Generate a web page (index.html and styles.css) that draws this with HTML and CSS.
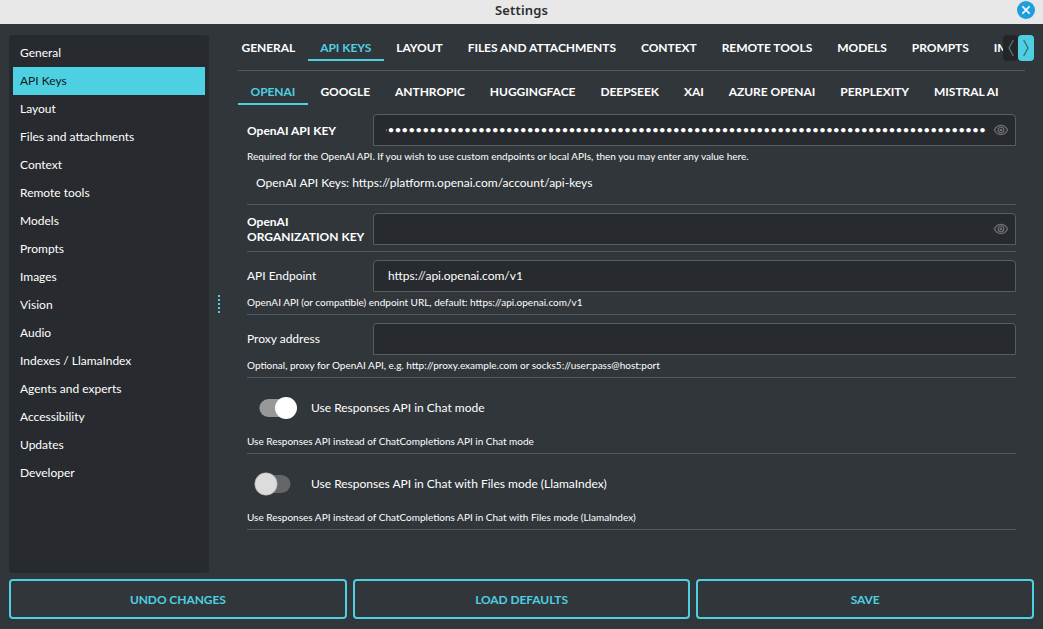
FILE: index.html
```html
<!DOCTYPE html>
<html lang="en">
<head>
<meta charset="utf-8">
<title>Settings</title>
<link rel="stylesheet" href="styles.css">
</head>
<body>
<header class="titlebar">
  <span class="title">Settings</span>
  <button class="close" aria-label="Close"><svg width="18" height="18" viewBox="0 0 18 18"><circle cx="9" cy="9" r="9" fill="#1f9ede"/><path d="M5.4 5.4l7.2 7.2M12.6 5.4l-7.2 7.2" stroke="#fff" stroke-width="1.5"/></svg></button>
</header>
<div class="workspace">
  <nav class="sidebar">
    <a class="nav">General</a>
    <a class="nav selected">API Keys</a>
    <a class="nav">Layout</a>
    <a class="nav">Files and attachments</a>
    <a class="nav">Context</a>
    <a class="nav">Remote tools</a>
    <a class="nav">Models</a>
    <a class="nav">Prompts</a>
    <a class="nav">Images</a>
    <a class="nav">Vision</a>
    <a class="nav">Audio</a>
    <a class="nav">Indexes / LlamaIndex</a>
    <a class="nav">Agents and experts</a>
    <a class="nav">Accessibility</a>
    <a class="nav">Updates</a>
    <a class="nav">Developer</a>
  </nav>
  <div class="splitter"><i></i><i></i><i></i><i></i><i></i></div>
  <main class="content">
    <div class="tabrow">
      <div class="tabs main-tabs">
        <span class="tab">GENERAL</span><span class="tab active">API KEYS</span><span class="tab">LAYOUT</span><span class="tab">FILES AND ATTACHMENTS</span><span class="tab">CONTEXT</span><span class="tab">REMOTE TOOLS</span><span class="tab">MODELS</span><span class="tab">PROMPTS</span><span class="tab">IMAGES</span>
      </div>
      <div class="scroller">
        <span class="arrow left"><svg width="16" height="26" viewBox="0 0 16 26"><path d="M10.300 5L6 13l4.300 8" fill="none" stroke="#626c73" stroke-width="1.3"/></svg></span>
        <span class="arrow right"><svg width="16" height="26" viewBox="0 0 16 26"><path d="M5.700 5L10 13l-4.300 8" fill="none" stroke="#3e6b75" stroke-width="1.3"/></svg></span>
      </div>
    </div>
    <div class="tabs sub-tabs">
      <span class="tab active">OPENAI</span><span class="tab">GOOGLE</span><span class="tab">ANTHROPIC</span><span class="tab">HUGGINGFACE</span><span class="tab">DEEPSEEK</span><span class="tab">XAI</span><span class="tab">AZURE OPENAI</span><span class="tab">PERPLEXITY</span><span class="tab">MISTRAL AI</span>
    </div>
    <div class="form">
      <section class="group key">
        <div class="row"><label class="label strong">OpenAI API KEY</label>
          <div class="field"><span class="secret">•••••••••••••••••••••••••••••••••••••••••••••••••••••••••••••••••••••••••••••••••••••••</span>
          <svg class="eye" width="16" height="12" viewBox="0 0 16 12"><path d="M1.300 6C4.600-.1 11.400-.1 14.700 6C11.400 12.100 4.600 12.100 1.300 6z"/><circle cx="8" cy="6" r="2.800"/><circle cx="8" cy="6" r=".7"/></svg></div></div>
        <p class="help">Required for the OpenAI API. If you wish to use custom endpoints or local APIs, then you may enter any value here.</p>
        <p class="link">OpenAI API Keys: https://platform.openai.com/account/api-keys</p>
      </section>
      <section class="group org">
        <div class="row"><label class="label strong">OpenAI<br>ORGANIZATION KEY</label>
          <div class="field"><svg class="eye" width="16" height="12" viewBox="0 0 16 12"><path d="M1.300 6C4.600-.1 11.400-.1 14.700 6C11.400 12.100 4.600 12.100 1.300 6z"/><circle cx="8" cy="6" r="2.800"/><circle cx="8" cy="6" r=".7"/></svg></div></div>
      </section>
      <section class="group text">
        <div class="row"><label class="label plain">API Endpoint</label><div class="field"><span class="value">https://api.openai.com/v1</span></div></div>
        <p class="help">OpenAI API (or compatible) endpoint URL, default: https://api.openai.com/v1</p>
      </section>
      <section class="group text">
        <div class="row"><label class="label plain">Proxy address</label><div class="field"></div></div>
        <p class="help">Optional, proxy for OpenAI API, e.g. http://proxy.example.com or socks5://user:pass@host:port</p>
      </section>
      <section class="group toggle">
        <div class="switch-row"><svg width="64" height="26" viewBox="0 0 64 26"><rect x="12.400" y="4" width="36" height="18" rx="9" fill="#989898"/><circle cx="39" cy="13" r="11" fill="#fff"/></svg><span class="caption">Use Responses API in Chat mode</span></div>
        <p class="help">Use Responses API instead of ChatCompletions API in Chat mode</p>
      </section>
      <section class="group toggle">
        <div class="switch-row"><svg width="64" height="26" viewBox="0 0 64 26"><rect x="7.500" y="4" width="36" height="18" rx="9" fill="#646769"/><circle cx="19" cy="13" r="11.200" fill="#dcdcdc" stroke="#aaa" stroke-width=".6"/></svg><span class="caption">Use Responses API in Chat with Files mode (LlamaIndex)</span></div>
        <p class="help">Use Responses API instead of ChatCompletions API in Chat with Files mode (LlamaIndex)</p>
      </section>
    </div>
  </main>
</div>
<footer class="actions">
  <button class="action">UNDO CHANGES</button>
  <button class="action">LOAD DEFAULTS</button>
  <button class="action">SAVE</button>
</footer>
</body>
</html>
```

FILE: styles.css
```css
* { box-sizing: border-box; }
body {
  margin: 0;
  width: 1043px;
  height: 629px;
  overflow: hidden;
  display: flex;
  flex-direction: column;
  background: #31363b;
  color: #fff;
  font: 12px/15px Lato, sans-serif;
}
p { margin: 0; }
svg { display: block; flex: none; }
.titlebar {
  position: relative;
  height: 24px;
  flex: none;
  background: #e8e8e8;
  color: #2d2d2d;
  text-align: center;
}
.title { font: 600 13px/21px "Noto Sans", sans-serif; letter-spacing: .15px; }
.close {
  position: absolute;
  top: 1px;
  right: 8px;
  padding: 0;
  border: 0;
  background: none;
}
.workspace { display: flex; height: 549px; padding-top: 11px; padding-left: 9px; }
.sidebar {
  width: 200px;
  height: 538px;
  padding: 4px;
  border-radius: 4px;
  background: #272a2e;
}
.nav { display: block; height: 28px; padding-left: 7px; line-height: 28px; white-space: nowrap; }
.selected { background: #4dd0e1; color: #10181a; }
.splitter {
  width: 20px;
  display: flex;
  flex-direction: column;
  align-items: center;
  justify-content: center;
  gap: 2px;
}
.splitter i { width: 2px; height: 2px; background: #4dd0e1; }
.content { width: 796px; margin-left: 9px; }
.tabrow {
  position: relative;
  width: 787px;
  height: 36px;
  border-bottom: 1px solid #4f5b62;
}
.tabs { display: flex; overflow: hidden; font-weight: 700; }
.tab {
  height: 26px;
  flex: none;
  padding: 0 12.5px;
  line-height: 26px;
  border-bottom: 2px solid transparent;
  white-space: nowrap;
  letter-spacing: -.05px;
}
.main-tabs .tab:first-child { margin-left: -9px; }
.active { color: #4dd0e1; border-color: #4dd0e1; }
.scroller { position: absolute; top: 0; left: 765px; display: flex; }
.arrow { width: 15px; height: 26px; border-radius: 4px; }
.left { background: #232629; }
.right { width: 16px; background: #4dd0e1; }
.sub-tabs { margin-top: 8px; }
.form { width: 769px; margin-left: 9px; }
.group { border-bottom: 1px solid #4f5b62; padding-top: 8px; }
.row { display: flex; align-items: center; height: 32px; }
.label { width: 126px; white-space: nowrap; }
.strong { font-weight: 700; }
.plain, .caption { padding-bottom: 2px; }
.field {
  position: relative;
  width: 643px;
  height: 32px;
  padding: 0 14px;
  border: 1px solid #5a5c5e;
  border-radius: 4px 4px 0 0;
  background: #272a2e;
  line-height: 30px;
}
.secret {
  display: flex;
  justify-content: flex-end;
  width: 600px;
  margin-left: -2px;
  overflow: hidden;
}
.eye { position: absolute; top: 9px; right: 6px; fill: none; stroke: #6b6e70; stroke-width: 1.3; }
.help { font-size: 10px; line-height: 12px; padding-top: 4px; }
.key { height: 100px; padding-top: 9px; }
.link { padding: 13px 0 0 9px; }
.org { height: 47px; }
.text { height: 63px; }
.toggle { height: 76px; padding-top: 17px; }
.switch-row { display: flex; align-items: center; height: 26px; }
.toggle .help { padding-top: 14px; }
.actions { display: flex; gap: 6px; padding: 6px 9px 0; }
.action {
  flex: 1;
  height: 40px;
  padding: 0;
  border: 2px solid #4dd0e1;
  border-radius: 4px;
  background: none;
  color: #4dd0e1;
  font: 700 12px/15px Lato, sans-serif;
  letter-spacing: -.08px;
}
```
